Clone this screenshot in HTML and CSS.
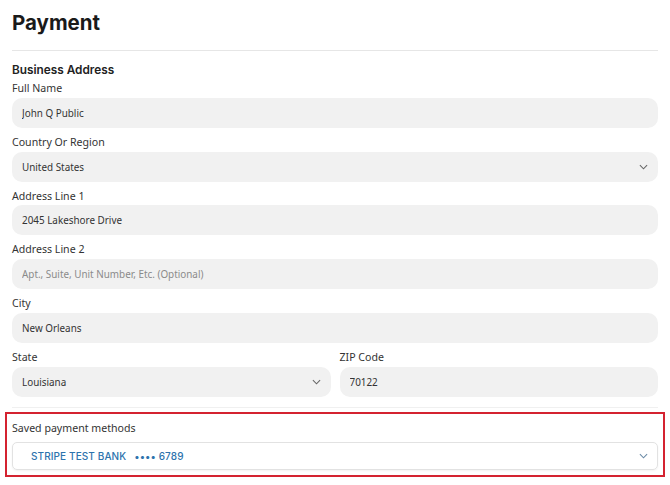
FILE: index.html
```html
<!DOCTYPE html>
<html lang="en">
<head>
    <meta charset="UTF-8" />
    <meta name="viewport" content="width=device-width, initial-scale=1.0" />
    <title>Payment</title>
    <link rel="stylesheet" href="styles.css">
</head>
<body>

<div class="page">
    <h1 class="title">Payment</h1>

    <form class="address" action="#" onsubmit="event.preventDefault();">
        <h3 class="section-title">Business Address</h3>

        <div class="field">
            <label for="full-name">Full Name</label>
            <input type="text" id="full-name" value="John Q Public" />
        </div>

        <div class="field">
            <label for="country">Country Or Region</label>
            <div class="select">
                <span>United States</span>
                <svg class="chevron" viewBox="0 0 10 6"><path d="M1 1l4 4 4-4" /></svg>
            </div>
        </div>

        <div class="field">
            <label for="line1">Address Line 1</label>
            <input type="text" id="line1" value="2045 Lakeshore Drive" />
        </div>

        <div class="field">
            <label for="line2">Address Line 2</label>
            <input type="text" id="line2" placeholder="Apt., Suite, Unit Number, Etc. (Optional)" />
        </div>

        <div class="field">
            <label for="city">City</label>
            <input type="text" id="city" value="New Orleans" />
        </div>

        <div class="row">
            <div class="field">
                <label for="state">State</label>
                <div class="select">
                    <span>Louisiana</span>
                    <svg class="chevron" viewBox="0 0 10 6"><path d="M1 1l4 4 4-4" /></svg>
                </div>
            </div>
            <div class="field">
                <label for="zip">ZIP Code</label>
                <input type="text" id="zip" value="70122" />
            </div>
        </div>
    </form>

    <!-- Saved payment methods -->
    <div class="saved">
        <label>Saved payment methods</label>
        <div class="method">
            <span class="bank">STRIPE TEST BANK</span>
            <span class="digits">&bull;&bull;&bull;&bull; 6789</span>
            <svg class="chevron blue" viewBox="0 0 10 6"><path d="M1 1l4 4 4-4" /></svg>
        </div>
    </div>
</div>

</body>
</html>
```

FILE: styles.css
```css
body {
    margin: 0;
    background: #fff;
    font-family: "Noto Sans", "Open Sans", sans-serif;
    color: #333;
}
.page {
    padding: 0 12px;
}
.title {
    font-family: Inter, sans-serif;
    font-size: 20.5px;
    font-weight: 700;
    color: #1a1a1a;
    margin: 0;
    padding: 8px 0 12px;
    line-height: 30px;
    border-bottom: 1px solid #e6e6e6;
}
.section-title {
    font-family: Inter, sans-serif;
    font-size: 11.8px;
    font-weight: 600;
    color: #222;
    margin: 11px 0 3px;
    line-height: 16px;
}
.address {
    padding-bottom: 10px;
    border-bottom: 1px solid #f0f0f0;
}
label {
    display: block;
    font-size: 10.6px;
    line-height: 15.8px;
    margin-bottom: 1px;
    color: #333;
}
.field {
    margin-bottom: 7px;
}
.row {
    display: grid;
    grid-template-columns: 1fr 1fr;
    gap: 9px;
}
.row .field {
    margin-bottom: 0;
}
input, .select {
    display: flex;
    align-items: center;
    width: 100%;
    height: 30px;
    box-sizing: border-box;
    padding: 0 10px;
    border: none;
    border-radius: 10px;
    background: #f1f1f1;
    font-family: inherit;
    font-size: 9.9px;
    color: #333;
    outline: none;
}
input::placeholder {
    color: #8a8a8a;
}
.select span {
    flex: 1;
}
.chevron {
    width: 9px;
    height: 6px;
    fill: none;
    stroke: #666;
    stroke-width: 1.2;
}
.chevron.blue {
    stroke: #6a8aa6;
}

/* Saved payment methods */
.saved {
    margin: 4px -7px 0;
    padding: 7px 5px 5px;
    border: 2px solid #d42330;
}
.saved label {
    margin-bottom: 5px;
}
.method {
    display: flex;
    align-items: center;
    height: 28px;
    box-sizing: border-box;
    padding: 0 9px 0 18px;
    border: 1px solid #e2e2e2;
    border-radius: 5px;
    box-shadow: 0 1px 2px rgba(0,0,0,0.05);
    font-family: Inter, sans-serif;
    font-size: 10px;
    font-weight: 500;
    color: #2d73ad;
    letter-spacing: 0.1px;
}
.bank {
    margin-right: 8px;
}
.digits {
    flex: 1;
}
```
